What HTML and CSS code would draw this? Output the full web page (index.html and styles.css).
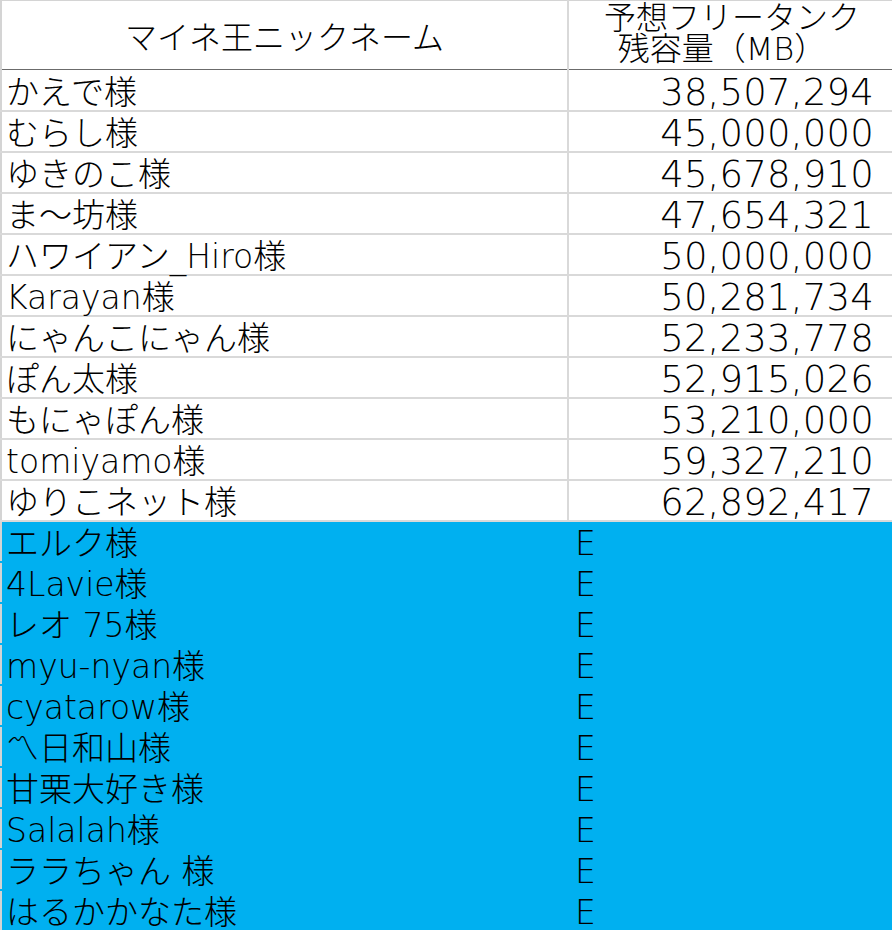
FILE: index.html
```html
<!DOCTYPE html>
<html lang="ja">
<head>
<meta charset="utf-8">
<title>マイネ王ニックネーム</title>
<link rel="stylesheet" href="styles.css">
</head>
<body>
<table class="sheet">
  <colgroup><col class="c-name"><col class="c-val"></colgroup>
  <thead>
    <tr class="head">
      <th class="h-name">マイネ王ニックネーム</th>
      <th class="h-val"><span class="hl">予想フリータンク</span><span class="hl">残容量（MB）</span></th>
    </tr>
  </thead>
  <tbody>
    <tr><td class="name">かえで様</td><td class="num">38,507,294</td></tr>
    <tr><td class="name">むらし様</td><td class="num">45,000,000</td></tr>
    <tr><td class="name">ゆきのこ様</td><td class="num">45,678,910</td></tr>
    <tr><td class="name">ま〜坊様</td><td class="num">47,654,321</td></tr>
    <tr><td class="name">ハワイアン_Hiro様</td><td class="num">50,000,000</td></tr>
    <tr><td class="name">Karayan様</td><td class="num">50,281,734</td></tr>
    <tr><td class="name">にゃんこにゃん様</td><td class="num">52,233,778</td></tr>
    <tr><td class="name">ぽん太様</td><td class="num">52,915,026</td></tr>
    <tr><td class="name">もにゃぽん様</td><td class="num">53,210,000</td></tr>
    <tr><td class="name">tomiyamo様</td><td class="num">59,327,210</td></tr>
    <tr><td class="name">ゆりこネット様</td><td class="num">62,892,417</td></tr>
    <tr class="blue"><td class="name">エルク様</td><td class="err">E</td></tr>
    <tr class="blue"><td class="name">4Lavie様</td><td class="err">E</td></tr>
    <tr class="blue"><td class="name">レオ 75様</td><td class="err">E</td></tr>
    <tr class="blue"><td class="name">myu-nyan様</td><td class="err">E</td></tr>
    <tr class="blue"><td class="name">cyatarow様</td><td class="err">E</td></tr>
    <tr class="blue"><td class="name">〽日和山様</td><td class="err">E</td></tr>
    <tr class="blue"><td class="name">甘栗大好き様</td><td class="err">E</td></tr>
    <tr class="blue"><td class="name">Salalah様</td><td class="err">E</td></tr>
    <tr class="blue"><td class="name">ララちゃん 様</td><td class="err">E</td></tr>
    <tr class="blue"><td class="name">はるかかなた様</td><td class="err">E</td></tr>
  </tbody>
</table>
</body>
</html>
```
FILE: styles.css
```css
html, body {
  margin: 0;
  padding: 0;
  background: #ffffff;
  overflow: hidden;
}
body {
  width: 892px;
  height: 930px;
  font-family: "DejaVu Sans", "Noto Sans CJK JP", sans-serif;
  font-weight: 200;
  color: #000;
}
.sheet {
  border-collapse: collapse;
  table-layout: fixed;
  width: 894px;
  border-top: 1px solid #d4d4d4;
  border-left: 2px solid #d4d4d4;
}
.c-name { width: 567px; }
.c-val { width: 327px; }
.sheet th, .sheet td {
  padding: 0;
  white-space: nowrap;
}
tr.head {
  height: 69px;
}
.head th {
  border-bottom: 1px solid #6b6b6b;
  font-weight: 200;
  font-size: 32px;
  line-height: 36px;
  vertical-align: middle;
  text-align: center;
}
.head th.h-name {
  border-right: 2px solid #d9d9d9;
  padding-top: 5px;
}
.head th.h-val {
  line-height: 31px;
  padding-bottom: 2px;
}
.hl {
  display: block;
}
.hl + .hl {
  padding-right: 20px;
}
tbody tr {
  height: 41px;
}
tbody td {
  border-bottom: 2px solid #d9d9d9;
  font-size: 33px;
  line-height: 35px;
  vertical-align: bottom;
}
tbody td.name {
  padding-left: 4px;
  border-right: 2px solid #d9d9d9;
}
tbody td.num {
  text-align: right;
  padding-right: 21px;
  font-size: 37px;
  letter-spacing: 0.2px;
}
tr.blue td {
  background: #00b0f0;
  border-bottom: 2px solid #00b0f0;
}
tr.blue td.name {
  border-right-color: #00b0f0;
}
tr.blue td.err {
  padding-left: 6px;
  font-size: 33px;
}
```
